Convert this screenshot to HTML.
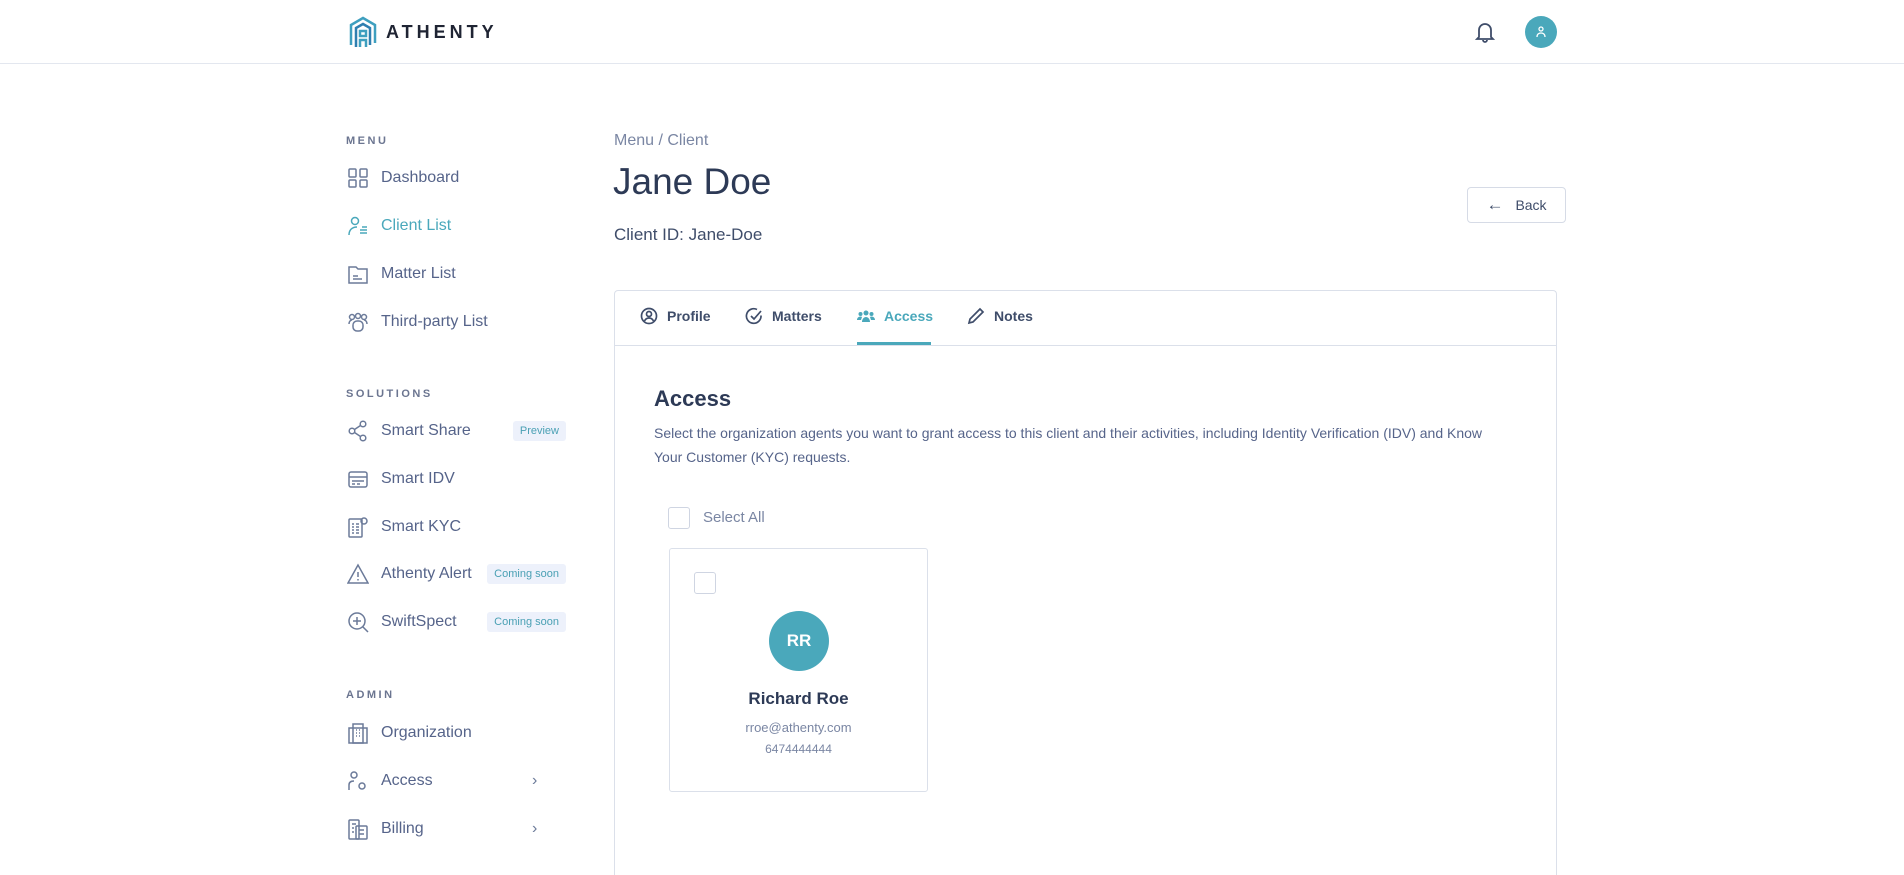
<!DOCTYPE html>
<html style="overflow:hidden;height:875px"><head><meta charset="utf-8"><style>
*{box-sizing:border-box;margin:0;padding:0}
body{width:1904px;height:875px;overflow:hidden;background:#fff;font-family:"Liberation Sans",sans-serif;color:#56648a;position:relative}
.a{position:absolute}
.hdr{left:0;top:0;width:1904px;height:64px;border-bottom:1px solid #e3e7ef}
.lbl{font-size:11px;font-weight:bold;letter-spacing:2.5px;color:#6b7590}
.it{left:347px;height:24px;display:flex;align-items:center;font-size:16px;color:#56648a}
.it svg{width:22px;height:22px;margin-right:12px;stroke:#6b7a99;fill:none;stroke-width:1.5}
.badge{position:absolute;right:0;background:#edf1fb;color:#4aa0b4;font-size:11px;padding:4px 7px;border-radius:3px}
.chev{position:absolute;left:185px;color:#6b7a99;font-size:16px}
.tab{top:307px;display:flex;align-items:center;font-size:14px;font-weight:bold;color:#3f4d6a}
.tab svg{width:18px;height:18px;margin-right:9px;fill:none;stroke:#3f4d6a;stroke-width:1.7}
.cb{border:1.5px solid #cfd5e2;border-radius:3px;width:22px;height:22px}
</style></head><body>
<div class="a hdr"></div>
<div class="a" style="left:348px;top:15px;display:flex;align-items:center">
<svg width="30" height="34" viewBox="0 0 30 34" fill="none" stroke-width="2.5"><path d="M3 30V10L15 3l12 7v18" stroke="#3e9fbf"/><path d="M8 32V13l7-4 7 4v17" stroke="#2f7fb0"/><path d="M12 32v-7h6v7M12 21v-5h6v5z" stroke="#3e9fbf"/></svg>
<span style="margin-left:8px;font-size:18px;font-weight:bold;letter-spacing:4px;color:#1f2433">ATHENTY</span></div>
<svg class="a" style="left:1475px;top:21px" width="20" height="22" viewBox="0 0 20 22" fill="none" stroke="#3f4d6a" stroke-width="1.8"><path d="M4 16V9a6 6 0 0 1 12 0v7l2 2H2z"/><path d="M8 19a2 2 0 0 0 4 0"/></svg>
<div class="a" style="left:1525px;top:16px;width:32px;height:32px;border-radius:50%;background:#4aa8bb"></div>
<svg class="a" style="left:1535px;top:25px" width="12" height="14" viewBox="0 0 12 14" fill="none" stroke="#fff" stroke-width="1.3"><circle cx="6" cy="4" r="2"/><path d="M2 12c0-3 2-4 4-4s4 1 4 4"/></svg>

<div class="a lbl" style="left:346px;top:135px">MENU</div>
<div class="a it" style="top:166px"><svg viewBox="0 0 22 22"><rect x="2" y="2" width="7" height="8" rx="1"/><rect x="13" y="2" width="7" height="8" rx="1"/><rect x="2" y="13" width="7" height="7" rx="1"/><rect x="13" y="13" width="7" height="7" rx="1"/></svg>Dashboard</div>
<div class="a it" style="top:214px;color:#4aa8bb"><svg viewBox="0 0 22 22" style="stroke:#4aa8bb"><circle cx="8" cy="6" r="3.5"/><path d="M2 20c0-5 3-8 8-8M13 15h7M13 18h7M15 12h5"/></svg>Client List</div>
<div class="a it" style="top:262px"><svg viewBox="0 0 22 22"><path d="M2 4h7l2 2h9v14H2z"/><path d="M6 13h5M6 16h9"/></svg>Matter List</div>
<div class="a it" style="top:310px"><svg viewBox="0 0 22 22"><circle cx="5" cy="6" r="2.5"/><circle cx="11" cy="5" r="2.5"/><circle cx="17" cy="6" r="2.5"/><path d="M2 13c0-3 2-4 3-4M20 13c0-3-2-4-3-4"/><rect x="6" y="10" width="10" height="10" rx="4"/></svg>Third-party List</div>

<div class="a lbl" style="left:346px;top:388px">SOLUTIONS</div>
<div class="a it" style="top:419px;width:219px"><svg viewBox="0 0 22 22"><circle cx="5" cy="11" r="2.8"/><circle cx="16" cy="4" r="2.8"/><circle cx="16" cy="18" r="2.8"/><path d="M7.5 9.5l6-4M7.5 12.5l6 4"/></svg>Smart Share<span class="badge">Preview</span></div>
<div class="a it" style="top:467px"><svg viewBox="0 0 22 22"><rect x="2" y="4" width="18" height="15" rx="2"/><path d="M2 9h18M5 13h12M5 16h3M10 16h3"/></svg>Smart IDV</div>
<div class="a it" style="top:515px"><svg viewBox="0 0 22 22"><rect x="2" y="3" width="13" height="18" rx="1"/><circle cx="17" cy="5" r="3"/><path d="M5 8h2M9 8h3M5 11h2M9 11h3M5 14h2M9 14h3M5 17h2M9 17h3"/></svg>Smart KYC</div>
<div class="a it" style="top:562px;width:219px"><svg viewBox="0 0 22 22"><path d="M11 2L1 20h20z"/><path d="M11 9v5M11 16v1.5"/></svg>Athenty Alert<span class="badge">Coming soon</span></div>
<div class="a it" style="top:610px;width:219px"><svg viewBox="0 0 22 22"><circle cx="10" cy="10" r="8"/><path d="M16 16l5 5M10 6v8M6 10h8"/></svg>SwiftSpect<span class="badge">Coming soon</span></div>

<div class="a lbl" style="left:346px;top:689px">ADMIN</div>
<div class="a it" style="top:721px"><svg viewBox="0 0 22 22"><rect x="2" y="6" width="18" height="15"/><rect x="6" y="2" width="10" height="19"/><path d="M9 8h1M12 8h1M9 11h1M12 11h1M9 14h1M12 14h1"/></svg>Organization</div>
<div class="a it" style="top:769px;width:219px"><svg viewBox="0 0 22 22"><circle cx="7" cy="5" r="3"/><path d="M2 20v-5c0-3 2-4 5-4"/><circle cx="15" cy="16" r="3"/></svg>Access<span class="chev">›</span></div>
<div class="a it" style="top:817px;width:219px"><svg viewBox="0 0 22 22"><rect x="2" y="2" width="10" height="19" rx="1"/><rect x="9" y="8" width="11" height="13" rx="1"/><path d="M5 6h4M5 10h2M5 14h2M12 12h5M12 16h5"/></svg>Billing<span class="chev">›</span></div>

<div class="a" style="left:614px;top:132px;font-size:16px;color:#7a86a3">Menu / Client</div>
<div class="a" style="left:613px;top:161px;font-size:37px;color:#2d3a56">Jane Doe</div>
<div class="a" style="left:614px;top:225px;font-size:17px;color:#3f4d6a">Client ID: Jane-Doe</div>
<div class="a" style="left:1467px;top:187px;width:99px;height:36px;border:1px solid #d6dbe6;border-radius:4px;display:flex;align-items:center;justify-content:center;font-size:14px;color:#3f4d6a"><span style="font-size:17px;margin-right:12px">←</span>Back</div>

<div class="a" style="left:614px;top:290px;width:943px;height:585px;border:1px solid #dbe0ea;border-bottom:none;border-radius:4px 4px 0 0"></div>
<div class="a" style="left:615px;top:345px;width:941px;height:1px;background:#dbe0ea"></div>
<div class="a tab" style="left:640px"><svg viewBox="0 0 18 18"><circle cx="9" cy="9" r="7.5"/><circle cx="9" cy="7" r="2.5"/><path d="M4.5 14c1-2 2.5-3 4.5-3s3.5 1 4.5 3"/></svg>Profile</div>
<div class="a tab" style="left:745px"><svg viewBox="0 0 18 18"><path d="M16 8.5A7.3 7.3 0 1 1 12 2.5"/><path d="M6 9l3 3 7-8"/></svg>Matters</div>
<div class="a tab" style="left:857px;color:#4aa8bb"><svg viewBox="0 0 18 18" style="fill:#4aa8bb;stroke:none"><circle cx="9" cy="6" r="2.5"/><circle cx="3.5" cy="7" r="2"/><circle cx="14.5" cy="7" r="2"/><path d="M5 15c0-3 2-5 4-5s4 2 4 5zM0 13c0-2 1.5-3.5 3.5-3.5 1 0 1.5.5 1.5.5L4 13zM18 13c0-2-1.5-3.5-3.5-3.5-1 0-1.5.5-1.5.5l1 3z"/></svg>Access</div>
<div class="a" style="left:857px;top:342px;width:74px;height:3px;background:#4aa8bb"></div>
<div class="a tab" style="left:967px"><svg viewBox="0 0 18 18"><path d="M13 2l3 3-10 10-4 1 1-4z"/></svg>Notes</div>

<div class="a" style="left:654px;top:386px;font-size:22px;font-weight:bold;color:#2d3a56">Access</div>
<div class="a" style="left:654px;top:421px;width:850px;font-size:14px;line-height:24px;color:#56648a">Select the organization agents you want to grant access to this client and their activities, including Identity Verification (IDV) and Know Your Customer (KYC) requests.</div>
<div class="a cb" style="left:668px;top:507px"></div>
<div class="a" style="left:703px;top:509px;font-size:15px;color:#7a86a3">Select All</div>
<div class="a" style="left:669px;top:548px;width:259px;height:244px;border:1px solid #dbe0ea;border-radius:3px"></div>
<div class="a cb" style="left:694px;top:572px"></div>
<div class="a" style="left:769px;top:611px;width:60px;height:60px;border-radius:50%;background:#4aa8bb;color:#fff;font-size:17px;font-weight:bold;display:flex;align-items:center;justify-content:center">RR</div>
<div class="a" style="left:669px;top:689px;width:259px;text-align:center;font-size:17px;font-weight:bold;color:#2d3a56">Richard Roe</div>
<div class="a" style="left:669px;top:720px;width:259px;text-align:center;font-size:13px;color:#7a86a3">rroe@athenty.com</div>
<div class="a" style="left:669px;top:742px;width:259px;text-align:center;font-size:12px;color:#7a86a3">6474444444</div>
</body></html>
